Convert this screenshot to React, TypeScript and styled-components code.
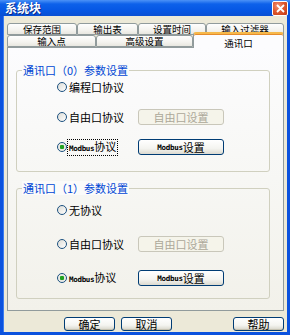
import styled, { createGlobalStyle } from "styled-components";

const GlobalStyle = createGlobalStyle`
  html, body {
    margin: 0;
    padding: 0;
    background: #ece9d8;
  }
  body {
    font-family: "Noto Sans CJK SC", "Noto Sans", sans-serif;
    font-size: 11px;
  }
`;

const topTabs = [
  { label: "保存范围", width: 70 },
  { label: "输出表", width: 61 },
  { label: "设置时间", width: 68 },
  { label: "输入过滤器", width: 78 },
];

const bottomTabs = [
  { label: "输入点", width: 89 },
  { label: "高级设置", width: 97 },
  { label: "通讯口", width: 91, active: true },
];

type Option = { label: string; modbus?: boolean; checked?: boolean; focus?: boolean; button?: string; disabled?: boolean };

const port0: Option[] = [
  { label: "编程口协议" },
  { label: "自由口协议", button: "自由口设置", disabled: true },
  { label: "协议", modbus: true, checked: true, focus: true, button: "设置" },
];

const port1: Option[] = [
  { label: "无协议" },
  { label: "自由口协议", button: "自由口设置", disabled: true },
  { label: "协议", modbus: true, checked: true, button: "设置" },
];

const Group = ({ title, options, top, gap, height }: { title: string; options: Option[]; top: number; gap: number; height: number }) => (
  <GroupBox $top={top} $gap={gap} $height={height}>
    <Legend>{title}</Legend>
    {options.map((o, i) => (
      <Row key={i}>
        <RadioWrap>
          <Radio $checked={!!o.checked} />
          <RadioText $focus={!!o.focus}>
            {o.modbus && <Mono>Modbus</Mono>}
            {o.label}
          </RadioText>
        </RadioWrap>
        {o.button && (
          <PushButton $disabled={!!o.disabled}>
            {o.modbus && <Mono>Modbus</Mono>}
            {o.button}
          </PushButton>
        )}
      </Row>
    ))}
  </GroupBox>
);

export default function App() {
  return (
    <>
      <GlobalStyle />
      <Window>
        <TitleBar>
          <Title>系统块</Title>
          <CloseButton>
            <svg width="9" height="9" viewBox="0 0 9 9">
              <path d="M1 1 L8 8 M8 1 L1 8" stroke="#fff" strokeWidth="1.8" />
            </svg>
          </CloseButton>
        </TitleBar>
        <Body>
          <TabRow>
            {topTabs.map((t) => (
              <Tab key={t.label} style={{ width: t.width }}>
                {t.label}
              </Tab>
            ))}
          </TabRow>
          <TabRow>
            {bottomTabs.map((t) => (
              <Tab key={t.label} $active={t.active} style={{ width: t.width }}>
                {t.label}
              </Tab>
            ))}
          </TabRow>
          <Panel>
            <Group title="通讯口（0）参数设置" options={port0} top={8} gap={14} height={102} />
            <Group title="通讯口（1）参数设置" options={port1} top={13} gap={18} height={111} />
          </Panel>
          <Footer>
            <DialogButton>确定</DialogButton>
            <DialogButton>取消</DialogButton>
            <HelpButton>帮助</HelpButton>
          </Footer>
        </Body>
      </Window>
    </>
  );
}

const Window = styled.div`
  width: 290px;
  height: 335px;
  display: flex;
  flex-direction: column;
  overflow: hidden;
`;

const TitleBar = styled.div`
  height: 16px;
  flex: none;
  display: flex;
  align-items: center;
  justify-content: space-between;
  padding: 0 2px 0 5px;
  background: linear-gradient(180deg, #4b92f7 0%, #0d61ea 25%, #0657e4 65%, #0a4fd2 100%);
`;

const Title = styled.span`
  color: #fff;
  font-weight: bold;
  font-size: 12px;
  line-height: 14px;
  text-shadow: 1px 1px 0 #0a2a8a;
`;

const CloseButton = styled.div`
  width: 14px;
  height: 13px;
  border: 1px solid #fff;
  border-radius: 2px;
  background: radial-gradient(circle at 35% 30%, #f49378 0%, #e05a30 45%, #c23a12 100%);
  display: flex;
  align-items: center;
  justify-content: center;
`;

const Body = styled.div`
  flex: 1;
  display: flex;
  flex-direction: column;
  padding: 7px 3px 0 4px;
  background: #ece9d8;
  border: 3px solid #0b52de;
  border-top: none;
  box-shadow: inset 1px 0 0 #3b7cf0;
`;

const TabRow = styled.div`
  display: flex;
  height: 12px;
  align-items: flex-end;
  position: relative;
`;

const Tab = styled.div<{ $active?: boolean }>`
  box-sizing: border-box;
  height: ${(p) => (p.$active ? "16px" : "12px")};
  margin-bottom: ${(p) => (p.$active ? "-1px" : "0")};
  padding-top: ${(p) => (p.$active ? "3px" : "0")};
  border: 1px solid #919b9c;
  border-bottom: ${(p) => (p.$active ? "none" : "1px solid #919b9c")};
  border-top: ${(p) => (p.$active ? "2px solid #f6b84a" : "1px solid #919b9c")};
  border-radius: 3px 3px 0 0;
  background: ${(p) => (p.$active ? "#fcfcfe" : "linear-gradient(180deg, #fefefe 0%, #f4f3ef 60%, #e8e7e0 100%)")};
  z-index: ${(p) => (p.$active ? 2 : 1)};
  display: flex;
  align-items: center;
  justify-content: center;
  font-size: 9.5px;
  line-height: 10px;
  color: #000;
  white-space: nowrap;
  box-shadow: ${(p) => (p.$active ? "inset 0 1px 0 #e68b2c" : "none")};
`;

const Panel = styled.div`
  box-sizing: border-box;
  height: 264px;
  border: 1px solid #919b9c;
  background: linear-gradient(180deg, #fcfcfe 0%, #f7f7f4 50%, #f2f1ea 100%);
  padding: 22px 13px 0 8px;
  display: flex;
  flex-direction: column;
  gap: 16px;
  position: relative;
  z-index: 1;
`;

const GroupBox = styled.div<{ $top: number; $gap: number; $height: number }>`
  box-sizing: border-box;
  position: relative;
  height: ${(p) => p.$height}px;
  border: 1px solid #d0d0bf;
  border-radius: 3px;
  padding: ${(p) => p.$top}px 0 0 40px;
  display: flex;
  flex-direction: column;
  gap: ${(p) => p.$gap}px;
`;

const Legend = styled.span`
  position: absolute;
  top: -8px;
  left: 5px;
  padding: 0 1px;
  background: #fbfbfa;
  color: #0046d5;
  font-size: 11px;
  line-height: 14px;
  white-space: nowrap;
`;

const Row = styled.div`
  display: flex;
  align-items: center;
  height: 16px;
`;

const RadioWrap = styled.div`
  width: 81px;
  display: flex;
  align-items: center;
  gap: 1px;
`;

const Radio = styled.span<{ $checked: boolean }>`
  box-sizing: border-box;
  width: 10px;
  height: 10px;
  border-radius: 50%;
  border: 1px solid #1c5180;
  background: ${(p) =>
    p.$checked
      ? "radial-gradient(circle, #21a121 0 2px, #e8e8e2 2.5px, #f8f8f5 100%)"
      : "linear-gradient(135deg, #dcdcd6, #fefefe)"};
  flex: none;
`;

const RadioText = styled.span<{ $focus: boolean }>`
  font-size: 11px;
  line-height: 12px;
  color: #000;
  white-space: nowrap;
  padding: 0 1px;
  outline: ${(p) => (p.$focus ? "1px dotted #000" : "none")};
`;

const Mono = styled.span`
  font-family: "DejaVu Sans Mono", "Liberation Mono", monospace;
  font-weight: bold;
  font-size: 7.5px;
  letter-spacing: -0.3px;
`;

const PushButton = styled.div<{ $disabled: boolean }>`
  box-sizing: border-box;
  width: 86px;
  height: 16px;
  border: 1px solid ${(p) => (p.$disabled ? "#c9c7ba" : "#003c74")};
  border-radius: 3px;
  background: ${(p) =>
    p.$disabled ? "#f5f4ea" : "linear-gradient(180deg, #ffffff 0%, #f4f4f0 60%, #dcdad0 100%)"};
  color: ${(p) => (p.$disabled ? "#aca899" : "#000")};
  display: flex;
  align-items: center;
  justify-content: center;
  font-size: 11px;
  white-space: nowrap;
`;

const Footer = styled.div`
  display: flex;
  gap: 6px;
  margin-top: 6px;
  padding-left: 57px;
`;

const DialogButton = styled.div`
  box-sizing: border-box;
  width: 51px;
  height: 14px;
  border: 1px solid #003c74;
  border-radius: 3px;
  background: linear-gradient(180deg, #ffffff 0%, #f4f4f0 60%, #d6d4c8 100%);
  box-shadow: inset 0 -1px 0 #c5c2b2;
  display: flex;
  align-items: center;
  justify-content: center;
  font-size: 11px;
  line-height: 12px;
  color: #000;
`;

const HelpButton = styled(DialogButton)`
  margin-left: auto;
`;
